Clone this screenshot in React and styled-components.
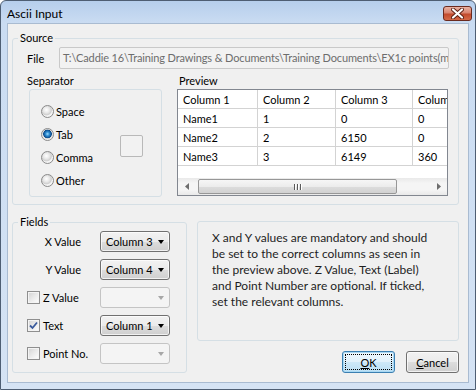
import React from 'react';
import styled, { createGlobalStyle } from 'styled-components';

const GlobalStyle = createGlobalStyle`
  html, body { margin: 0; padding: 0; background: #ffffff; }
  body {
    font-family: Lato, "Open Sans", sans-serif;
    font-size: 11px;
    color: #000;
  }
  * { box-sizing: border-box; }
`;

const Window = styled.div`
  width: 476px;
  height: 390px;
  border: 1px solid #4e5e73;
  border-radius: 6px 6px 0 0;
  background: linear-gradient(#b6ceec 0px, #cadcf2 22px, #d5e3f4 100%);
  padding: 0 6px 6px;
  display: flex;
  flex-direction: column;
`;

const TitleBar = styled.div`
  height: 22px;
  display: flex;
  align-items: center;
  justify-content: space-between;
`;

const Title = styled.span`
  font-size: 12px;
  color: #000;
  padding-top: 2px;
`;

const CloseButton = styled.div`
  width: 29px;
  height: 15px;
  margin-right: -3px;
  margin-top: 2px;
  border: 1px solid #6a2a1f;
  border-radius: 3px;
  background: linear-gradient(#e9b2a3 0%, #d98470 45%, #c24a2d 55%, #d46a48 100%);
  display: flex;
  align-items: center;
  justify-content: center;
`;

const Client = styled.div`
  flex: 1;
  background: #f0f0f0;
  border: 1px solid #a9bbd1;
  padding: 7px 9px 0 4px;
  display: flex;
  flex-direction: column;
`;

const Group = styled.fieldset`
  margin: 0;
  min-width: 0;
  border: 1px solid #d5dfe5;
  border-radius: 3px;
  padding: ${p => p.$pad};
  width: ${p => p.$width || 'auto'};
`;

const Legend = styled.legend`
  padding: 0 2px;
  margin-left: -9px;
  height: 14px;
  line-height: 14px;
`;

const FileRow = styled.div`
  display: flex;
  align-items: center;
  height: 22px;
`;

const FieldLabel = styled.span`
  width: ${p => p.$width}px;
  flex: none;
`;

const PathBox = styled.div`
  width: 390px;
  height: 22px;
  border: 1px solid #c9c9c9;
  border-radius: 2px;
  background: #f2f2f2;
  color: #6d6d6d;
  padding-left: 3px;
  line-height: 20px;
  letter-spacing: -0.14px;
  white-space: nowrap;
  overflow: hidden;
`;

const PaneRow = styled.div`
  display: flex;
  gap: 15px;
  margin-top: 5px;
`;

const PaneColumn = styled.div`
  width: ${p => p.$width}px;
  display: flex;
  flex-direction: column;
`;

const PaneLabel = styled.div`
  height: 14px;
  line-height: 14px;
  padding-left: 2px;
  margin-bottom: 1px;
  margin-left: ${p => p.$shift || 0}px;
`;

const SepBox = styled.div`
  margin-left: 2px;
  width: 133px;
  height: 108px;
  border: 1px solid #d5dfe5;
  border-radius: 3px;
  display: flex;
  align-items: center;
  padding: 5px 0 0 11px;
`;

const RadioList = styled.div`
  width: 79px;
  display: flex;
  flex-direction: column;
`;

const RadioRow = styled.label`
  height: 23px;
  display: flex;
  align-items: center;
`;

const RadioDot = styled.span`
  width: 13px;
  height: 13px;
  border-radius: 50%;
  border: 1px solid #8a8a8a;
  margin-right: 2px;
  background: ${p => p.$on
    ? 'radial-gradient(circle at 50% 45%, #9fdcff 0px, #2d8bd0 2px, #0b4a8a 4px, #d8d8d8 4.6px, #f6f6f6 6px)'
    : 'radial-gradient(circle at 40% 35%, #ffffff 0px, #e8e8e8 3px, #cfcfcf 5px, #f4f4f4 6px)'};
  flex: none;
`;

const OtherBox = styled.div`
  width: 23px;
  height: 22px;
  border: 1px solid #b9b9b9;
  border-radius: 2px;
  background: #f2f2f2;
`;

const ListView = styled.div`
  width: 271px;
  height: 107px;
  border: 1px solid #828790;
  background: #fff;
  display: flex;
  flex-direction: column;
  overflow: hidden;
`;

const ListRow = styled.div`
  display: flex;
  height: ${p => p.$h}px;
  border-bottom: 1px solid #d3d3d3;
  flex: none;
`;

const Cell = styled.div`
  width: ${p => p.$w}px;
  flex: none;
  border-right: 1px solid #d3d3d3;
  padding-left: 5px;
  display: flex;
  align-items: center;
  white-space: nowrap;
  overflow: hidden;
`;

const ListFill = styled.div`
  flex: 1;
`;

const HScroll = styled.div`
  height: 17px;
  flex: none;
  display: flex;
  align-items: center;
  background: linear-gradient(#e9e9e9, #f5f5f5 30%, #f5f5f5 70%, #e9e9e9);
`;

const ScrollArrow = styled.div`
  width: 17px;
  height: 17px;
  display: flex;
  align-items: center;
  justify-content: center;
  flex: none;
`;

const Thumb = styled.div`
  width: 199px;
  height: 15px;
  margin-left: 3px;
  border: 1px solid #979797;
  border-radius: 2px;
  background: linear-gradient(#f6f6f6 0%, #ececec 50%, #dcdcdc 51%, #d2d2d2 100%);
  display: flex;
  align-items: center;
  justify-content: center;
  gap: 2px;
`;

const Grip = styled.span`
  width: 1px;
  height: 6px;
  background: #5a5a5a;
  box-shadow: 1px 0 0 #ffffff;
`;

const LowerRow = styled.div`
  display: flex;
  gap: 10px;
  margin-top: 10px;
`;

const FieldGrid = styled.div`
  display: grid;
  grid-template-columns: 73px 70px;
  grid-auto-rows: 21px;
  row-gap: 7px;
  align-items: center;
`;

const RightLabel = styled.span`
  text-align: right;
  padding-right: 19px;
`;

const CheckLabel = styled.label`
  display: flex;
  align-items: center;
  gap: 3px;
`;

const CheckBox = styled.span`
  width: 13px;
  height: 13px;
  border: 1px solid #8f8f8f;
  background: linear-gradient(135deg, #d2d2d2 0%, #eaeaea 50%, #ffffff 100%);
  box-shadow: inset 0 0 0 1px #f4f4f4;
  display: flex;
  align-items: center;
  justify-content: center;
  flex: none;
`;

const Combo = styled.div`
  width: 70px;
  height: 21px;
  border: 1px solid ${p => p.$disabled ? '#c4c4c4' : '#707070'};
  border-radius: 3px;
  background: ${p => p.$disabled
    ? '#f4f4f4'
    : 'linear-gradient(#f2f2f2 0%, #ebebeb 50%, #dddddd 51%, #cfcfcf 100%)'};
  box-shadow: ${p => p.$disabled ? 'none' : 'inset 0 0 0 1px rgba(255,255,255,0.7)'};
  display: flex;
  align-items: center;
  justify-content: space-between;
  padding: 0 5px 0 5px;
`;

const ComboArrow = styled.span`
  width: 0;
  height: 0;
  border-left: 3.5px solid transparent;
  border-right: 3.5px solid transparent;
  border-top: 4px solid ${p => p.$disabled ? '#a7a7a7' : '#000'};
  margin-left: auto;
`;

const RightColumn = styled.div`
  flex: 1;
  display: flex;
  flex-direction: column;
  padding-top: 6px;
`;

const InfoBox = styled.div`
  height: 120px;
  border: 1px solid #d5dfe5;
  border-radius: 3px;
  padding: 8px 8px 0 14px;
  font-size: 12px;
  line-height: 16px;
  color: #1e1e1e;
`;

const ButtonRow = styled.div`
  display: flex;
  justify-content: flex-end;
  gap: 11px;
  margin-top: 10px;
`;

const Button = styled.button`
  width: 53px;
  height: 22px;
  font: inherit;
  font-size: 11px;
  color: #000;
  padding: 0;
  border-radius: 3px;
  border: 1px solid ${p => p.$default ? '#3c7fb1' : '#707070'};
  background: ${p => p.$default
    ? 'linear-gradient(#eef7fd 0%, #e1f1fb 50%, #cde8f8 51%, #bcdff4 100%)'
    : 'linear-gradient(#f2f2f2 0%, #ebebeb 50%, #dddddd 51%, #cfcfcf 100%)'};
  box-shadow: ${p => p.$default ? 'inset 0 0 0 1px #a8d8f3' : 'inset 0 0 0 1px rgba(255,255,255,0.7)'};
  outline: ${p => p.$default ? '1px dotted #000' : 'none'};
  outline-offset: -4px;
`;

const CheckMark = () => (
  <svg width="9" height="9" viewBox="0 0 9 9">
    <path d="M1 4.5 L3.5 7 L8 1.5" fill="none" stroke="#3a5a9c" strokeWidth="1.8" />
  </svg>
);

const Arrow = ({ dir }) => (
  <svg width="4" height="7" viewBox="0 0 4 7">
    {dir === 'left'
      ? <path d="M4 0 L0 3.5 L4 7 Z" fill="#6e6e6e" />
      : <path d="M0 0 L4 3.5 L0 7 Z" fill="#6e6e6e" />}
  </svg>
);

const CloseGlyph = () => (
  <svg width="13" height="11" viewBox="0 0 13 11">
    <path d="M2 1.5 L11 9.5 M11 1.5 L2 9.5" stroke="#5a1f14" strokeWidth="4" strokeLinecap="round" />
    <path d="M2 1.5 L11 9.5 M11 1.5 L2 9.5" stroke="#ffffff" strokeWidth="2.2" strokeLinecap="round" />
  </svg>
);

const columns = [80, 78, 77, 90];
const header = ['Column 1', 'Column 2', 'Column 3', 'Column 4'];
const rows = [
  ['Name1', '1', '0', '0'],
  ['Name2', '2', '6150', '0'],
  ['Name3', '3', '6149', '360'],
];

const separators = ['Space', 'Tab', 'Comma', 'Other'];

function FieldRow({ label, check, checked, value, disabled }) {
  return (
    <>
      {check ? (
        <CheckLabel>
          <CheckBox>{checked && <CheckMark />}</CheckBox>
          {label}
        </CheckLabel>
      ) : (
        <RightLabel>{label}</RightLabel>
      )}
      <Combo $disabled={disabled}>
        {value}
        <ComboArrow $disabled={disabled} />
      </Combo>
    </>
  );
}

export default function App() {
  return (
    <>
      <GlobalStyle />
      <Window>
        <TitleBar>
          <Title>Ascii Input</Title>
          <CloseButton><CloseGlyph /></CloseButton>
        </TitleBar>
        <Client>
          <Group $pad="2px 9px 7px 14px">
            <Legend>Source</Legend>
            <FileRow>
              <FieldLabel $width={32}>File</FieldLabel>
              <PathBox>T:\Caddie 16\Training Drawings &amp; Documents\Training Documents\EX1c points(metric).txt</PathBox>
            </FileRow>
            <PaneRow>
              <PaneColumn $width={135}>
                <PaneLabel $shift={-2}>Separator</PaneLabel>
                <SepBox>
                  <RadioList>
                    {separators.map(s => (
                      <RadioRow key={s}>
                        <RadioDot $on={s === 'Tab'} />
                        {s}
                      </RadioRow>
                    ))}
                  </RadioList>
                  <OtherBox />
                </SepBox>
              </PaneColumn>
              <PaneColumn $width={271}>
                <PaneLabel>Preview</PaneLabel>
                <ListView>
                  <ListRow $h={19}>
                    {header.map((h, i) => <Cell key={h} $w={columns[i]}>{h}</Cell>)}
                  </ListRow>
                  {rows.map((r, ri) => (
                    <ListRow key={ri} $h={19}>
                      {r.map((c, i) => <Cell key={i} $w={columns[i]}>{c}</Cell>)}
                    </ListRow>
                  ))}
                  <ListFill />
                  <HScroll>
                    <ScrollArrow><Arrow dir="left" /></ScrollArrow>
                    <Thumb><Grip /><Grip /><Grip /></Thumb>
                    <ListFill />
                    <ScrollArrow><Arrow dir="right" /></ScrollArrow>
                  </HScroll>
                </ListView>
              </PaneColumn>
            </PaneRow>
          </Group>
          <LowerRow>
            <Group $pad="2px 15px 7px 14px" $width="175px">
              <Legend>Fields</Legend>
              <FieldGrid>
                <FieldRow label="X Value" value="Column 3" />
                <FieldRow label="Y Value" value="Column 4" />
                <FieldRow label="Z Value" check disabled />
                <FieldRow label="Text" check checked value="Column 1" />
                <FieldRow label="Point No." check disabled />
              </FieldGrid>
            </Group>
            <RightColumn>
              <InfoBox>
                X and Y values are mandatory and should<br />
                be set to the correct columns as seen in<br />
                the preview above. Z Value, Text (Label)<br />
                and Point Number are optional. If ticked,<br />
                set the relevant columns.
              </InfoBox>
              <ButtonRow>
                <Button $default><u>O</u>K</Button>
                <Button><u>C</u>ancel</Button>
              </ButtonRow>
            </RightColumn>
          </LowerRow>
        </Client>
      </Window>
    </>
  );
}
